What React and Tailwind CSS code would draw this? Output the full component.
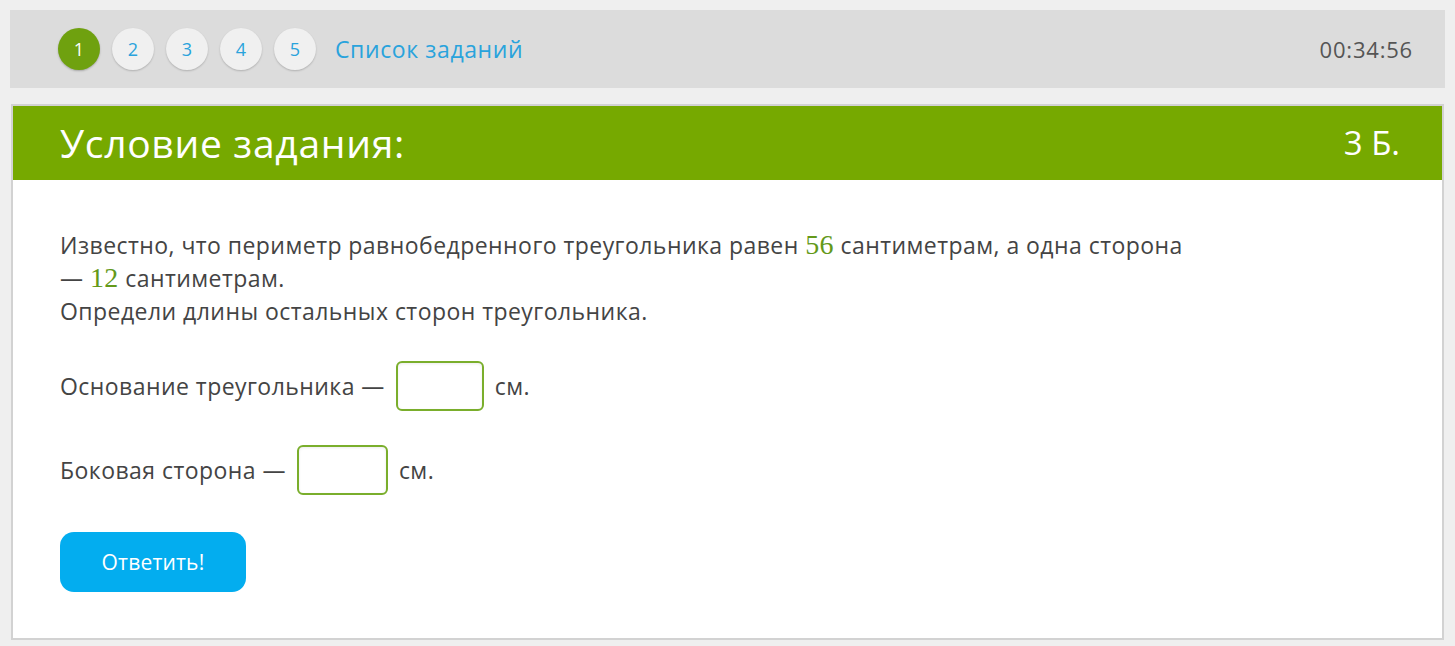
import React from 'react';

const Num = ({ children }) => (
  <span className="text-[#64991a] text-[28px] leading-none" style={{ fontFamily: '"Liberation Serif", "DejaVu Serif", serif' }}>
    {children}
  </span>
);

export default function App() {
  const pages = [1, 2, 3, 4, 5];

  return (
    <div className="min-h-[646px] bg-[#efefef] p-[10px] pb-[6px] text-[#444]" style={{ fontFamily: '"Open Sans", "Noto Sans", sans-serif' }}>
      <div className="h-[78px] bg-[#dcdcdc] flex items-center justify-between pl-[48px] pr-[32px]">
        <div className="flex items-center gap-[12px]">
          {pages.map((n) => (
            <div
              key={n}
              className={
                n === 1
                  ? 'w-[42px] h-[42px] rounded-full bg-[#6fa10f] text-white flex items-center justify-center text-[18px] shadow-[0_1px_2px_rgba(0,0,0,0.25)]'
                  : 'w-[42px] h-[42px] rounded-full bg-[#f0f0f0] text-[#29a3dc] flex items-center justify-center text-[18px] shadow-[0_1px_2px_rgba(0,0,0,0.2)]'
              }
            >
              {n}
            </div>
          ))}
          <span className="ml-[7px] text-[23px] tracking-[0.6px] text-[#29a3dc]">Список заданий</span>
        </div>
        <span className="text-[22px] tracking-[0.8px] text-[#555]">00:34:56</span>
      </div>

      <div className="mt-[16px] mx-[1px] border-2 border-[#d2d2d2] bg-white h-[536px]">
        <div className="h-[74px] bg-[#76a900] flex items-center justify-between pl-[47px] pr-[42px] text-white">
          <span className="text-[39px] tracking-[0.7px]">Условие задания:</span>
          <span className="text-[33px]">3 Б.</span>
        </div>
        <div className="pl-[47px] pt-[49px] text-[23px] tracking-[0.45px] leading-[33px]">
          <p className="max-w-[1200px]">
            Известно, что периметр равнобедренного треугольника равен <Num>56</Num> сантиметрам, а одна сторона
            <br />— <Num>12</Num> сантиметрам.
            <br />Определи длины остальных сторон треугольника.
          </p>
          <div className="mt-[33px] flex items-center gap-[11px]">
            <span>Основание треугольника —</span>
            <input className="w-[88px] h-[50px] border-2 border-[#7aae2c] rounded-[6px] outline-none shadow-[inset_0_1px_3px_rgba(0,0,0,0.08)]" />
            <span>см.</span>
          </div>
          <div className="mt-[34px] flex items-center gap-[11px]">
            <span>Боковая сторона —</span>
            <input className="w-[91px] h-[50px] border-2 border-[#7aae2c] rounded-[6px] outline-none shadow-[inset_0_1px_3px_rgba(0,0,0,0.08)]" />
            <span>см.</span>
          </div>
          <button className="mt-[37px] w-[186px] h-[60px] rounded-[14px] bg-[#03adef] text-white text-[21px] tracking-[0.2px]">
            Ответить!
          </button>
        </div>
      </div>
    </div>
  );
}
